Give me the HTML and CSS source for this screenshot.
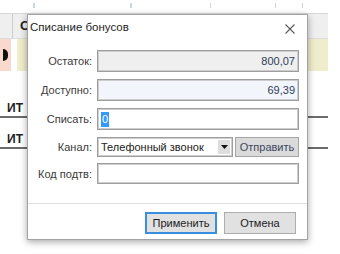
FILE: index.html
```html
<!DOCTYPE html>
<html lang="ru">
<head>
<meta charset="utf-8">
<title>Списание бонусов</title>
<link rel="stylesheet" href="styles.css">
</head>
<body>
<div class="page">
  <div class="grid">
    <div class="top">
      <span class="tick t1"></span>
      <span class="tick t2"></span>
      <span class="tick t3"></span>
      <span class="tick t4"></span>
      <span class="tick t5"></span>
    </div>
    <div class="hrow">
      <div class="hc1"></div>
      <div class="hc2">С</div>
    </div>
    <div class="crow">
      <div class="pink"><span class="dot"></span></div>
      <div class="gapcell"></div>
      <div class="yellow"></div>
    </div>
    <div class="trow r1">ИТ</div>
    <div class="trow r2">ИТ</div>
  </div>

  <div class="dialog">
    <div class="titlebar">
      <span class="title">Списание бонусов</span>
      <svg class="close" width="10" height="10" viewBox="0 0 10 10"><path d="M0.5 0.5L9.5 9.5M9.5 0.5L0.5 9.5" stroke="#5a5a5a" stroke-width="1.1" fill="none"/></svg>
    </div>
    <div class="form">
      <div class="row">
        <span class="label">Остаток:</span>
        <div class="field ro num">800,07</div>
      </div>
      <div class="row">
        <span class="label">Доступно:</span>
        <div class="field av num">69,39</div>
      </div>
      <div class="row">
        <span class="label">Списать:</span>
        <div class="field"><span class="sel">0</span></div>
      </div>
      <div class="row short">
        <span class="label">Канал:</span>
        <div class="combo">
          <div class="select"><span class="seltext">Телефонный звонок</span><span class="arrow"><svg width="7" height="4" viewBox="0 0 7 4"><path d="M0 0H7L3.5 4Z" fill="#111"/></svg></span></div>
          <div class="send">Отправить</div>
        </div>
      </div>
      <div class="row short last">
        <span class="label">Код подтв:</span>
        <div class="field"></div>
      </div>
    </div>
    <div class="footer">
      <div class="btn primary">Применить</div>
      <div class="btn">Отмена</div>
    </div>
  </div>
</div>
</body>
</html>
```
FILE: styles.css
```css
html, body {
  margin: 0;
  padding: 0;
  background: #ffffff;
}
body {
  width: 340px;
  height: 254px;
  overflow: hidden;
  font-family: "Liberation Sans", Arial, sans-serif;
  font-size: 11px;
  color: #333;
}
.page {
  position: relative;
  width: 340px;
  height: 254px;
}
.grid {
  width: 328px;
}
.top {
  height: 13px;
  display: flex;
  align-items: flex-start;
}
.tick {
  display: block;
  width: 1px;
  height: 5px;
  margin-top: 3px;
  background: #cfd3da;
}
.t1 { margin-left: 33px; background: #c9d3e6; width: 2px; }
.t2 { margin-left: 95px; background: #c9d3e6; width: 2px; }
.t3 { margin-left: 78px; }
.t4 { margin-left: 64px; }
.t5 { margin-left: 26px; }
.hrow {
  height: 24px;
  display: flex;
  background: #efefef;
  border-top: 1px solid #d9d9d9;
  border-bottom: 1px solid #dedede;
}
.hc1 {
  width: 12px;
  border-right: 1px solid #cccccc;
}
.hc2 {
  padding-left: 7px;
  font-size: 13px;
  font-weight: bold;
  line-height: 24px;
  color: #222;
}
.crow {
  height: 32px;
  display: flex;
}
.pink {
  width: 11px;
  background: #f9d8cd;
  display: flex;
  align-items: center;
}
.dot {
  display: block;
  width: 5px;
  height: 12px;
  margin-left: 3px;
  background: #111;
  border-radius: 0 6px 6px 0;
}
.gapcell {
  width: 6px;
}
.yellow {
  flex: 1;
  background: #efedcc;
}
.trow {
  font-weight: bold;
  font-size: 12px;
  color: #222;
  padding-left: 7px;
  border-bottom: 2px solid #6b6b6b;
}
.r1 {
  margin-top: 30px;
  height: 15px;
  line-height: 15px;
}
.r2 {
  margin-top: 12px;
  height: 17px;
  line-height: 19px;
}
.dialog {
  position: absolute;
  left: 27px;
  top: 14px;
  width: 281px;
  height: 226px;
  box-sizing: border-box;
  background: #ffffff;
  border: 1px solid #a3a3a3;
  box-shadow: 0 2px 7px rgba(0, 0, 0, 0.35);
  display: flex;
  flex-direction: column;
}
.titlebar {
  height: 24px;
  display: flex;
  align-items: center;
  justify-content: space-between;
  padding-left: 2px;
  padding-right: 12px;
}
.title {
  font-size: 11.5px;
  color: #1e1e1e;
  line-height: 24px;
}
.close {
  margin-top: 4px;
}
.form {
  padding-top: 11px;
  display: flex;
  flex-direction: column;
}
.row {
  display: flex;
  align-items: center;
  height: 22px;
  margin-bottom: 7px;
}
.row.short {
  height: 20px;
  margin-bottom: 6px;
}
.row.last {
  height: 21px;
  margin-bottom: 0;
}
.label {
  width: 64px;
  margin-right: 5px;
  text-align: right;
  color: #3a3a3a;
}
.field {
  width: 202px;
  height: 100%;
  box-sizing: border-box;
  border: 1px solid #9e9e9e;
  box-shadow: inset 0 0 0 1px #cdcdcd;
  background: #fff;
  padding: 0 3px;
  display: flex;
  align-items: center;
}
.field.ro {
  background: #efefef;
}
.field.av {
  background: #f2f6fc;
}
.num {
  justify-content: flex-end;
  color: #2e3d5a;
}
.sel {
  display: inline-block;
  background: #3399ff;
  color: #fff;
  line-height: 15px;
  padding: 0 1px;
}
.combo {
  width: 202px;
  height: 100%;
  display: flex;
  gap: 2px;
}
.select {
  width: 136px;
  box-sizing: border-box;
  border: 1px solid #9e9e9e;
  box-shadow: inset 0 0 0 1px #cdcdcd;
  display: flex;
  align-items: center;
  padding-left: 3px;
}
.seltext {
  flex: 1;
  color: #222;
  white-space: nowrap;
  overflow: hidden;
}
.arrow {
  width: 12px;
  align-self: stretch;
  margin: 2px 2px 2px 0;
  background: #dedede;
  display: flex;
  align-items: center;
  justify-content: center;
}
.send {
  flex: 1;
  box-sizing: border-box;
  border: 1px solid #a6a6a6;
  background: #dadada;
  color: #3a4760;
  display: flex;
  align-items: center;
  justify-content: center;
}
.footer {
  margin-top: auto;
  height: 36px;
  border-top: 1px solid #e0e0e0;
  display: flex;
  justify-content: flex-end;
  align-items: flex-start;
  gap: 7px;
  padding-top: 8px;
  padding-right: 11px;
  box-sizing: border-box;
}
.btn {
  width: 72px;
  height: 22px;
  box-sizing: border-box;
  border: 1px solid #adadad;
  background: #e1e1e1;
  color: #222;
  display: flex;
  align-items: center;
  justify-content: center;
}
.btn.primary {
  border: 2px solid #3a8ee0;
}
```
